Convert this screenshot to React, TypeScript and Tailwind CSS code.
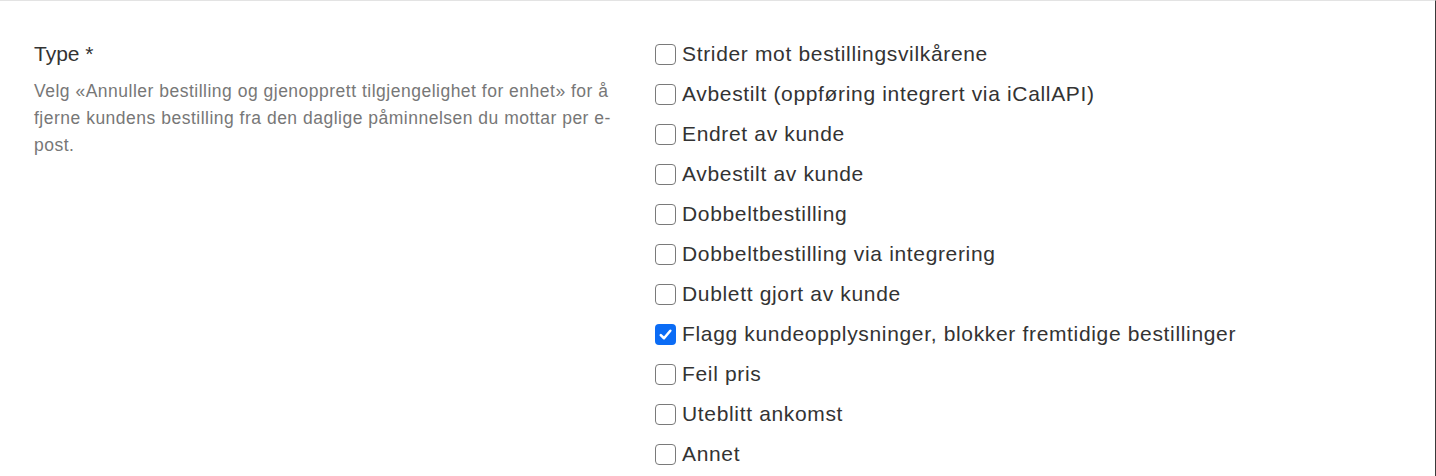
import { useState } from "react";

const OPTIONS = [
  "Strider mot bestillingsvilkårene",
  "Avbestilt (oppføring integrert via iCallAPI)",
  "Endret av kunde",
  "Avbestilt av kunde",
  "Dobbeltbestilling",
  "Dobbeltbestilling via integrering",
  "Dublett gjort av kunde",
  "Flagg kundeopplysninger, blokker fremtidige bestillinger",
  "Feil pris",
  "Uteblitt ankomst",
  "Annet",
];

function Box({ checked }: { checked: boolean }) {
  if (checked) {
    return (
      <span className="w-[21px] h-[21px] rounded-[4px] bg-[#0b6cf5] flex items-center justify-center flex-shrink-0">
        <svg width="15" height="15" viewBox="0 0 14 14" fill="none">
          <path
            d="M2.6 7.5l3 3 5.9-7"
            stroke="#fff"
            strokeWidth="2.4"
            strokeLinecap="round"
            strokeLinejoin="round"
          />
        </svg>
      </span>
    );
  }
  return (
    <span className="block w-[21px] h-[21px] rounded-[4px] border border-[#7a7a7a] bg-white flex-shrink-0" />
  );
}

export default function App() {
  const [checked, setChecked] = useState<string[]>([OPTIONS[7]]);

  const toggle = (o: string) =>
    setChecked((c) => (c.includes(o) ? c.filter((x) => x !== o) : [...c, o]));

  return (
    <div
      className="w-[1436px] h-[476px] bg-white border-t border-[#e3e3e3] border-r border-r-[#3a3a3a] overflow-hidden"
      style={{ fontFamily: '"Liberation Sans", Arial, sans-serif' }}
    >
      <div className="flex pt-[33px] pl-[34px]">
        {/* Left: label + help */}
        <div className="w-[596px] flex-shrink-0">
          <div className="h-[40px] leading-[40px] text-[21px] text-[#333]">Type *</div>
          <p className="mt-[4px] text-[17.5px] tracking-[0.5px] leading-[27px] text-[#777]">
            Velg «Annuller bestilling og gjenopprett tilgjengelighet for enhet» for å fjerne kundens
            bestilling fra den daglige påminnelsen du mottar per e-post.
          </p>
        </div>

        {/* Right: options */}
        <div className="ml-[25px] flex flex-col">
          {OPTIONS.map((o) => (
            <label
              key={o}
              onClick={() => toggle(o)}
              className="h-[40px] flex items-center gap-[6px] cursor-pointer select-none"
            >
              <span className="pt-[1px]">
                <Box checked={checked.includes(o)} />
              </span>
              <span className="text-[21px] tracking-[0.66px] text-[#333] leading-[40px]">{o}</span>
            </label>
          ))}
        </div>
      </div>
    </div>
  );
}
